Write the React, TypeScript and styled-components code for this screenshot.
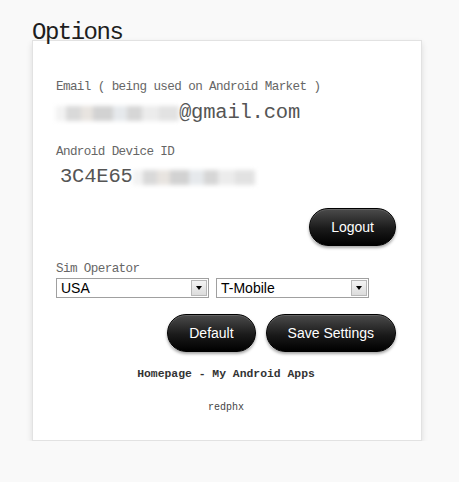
import styled, { createGlobalStyle } from 'styled-components'

const GlobalStyle = createGlobalStyle`
  html, body {
    margin: 0;
    padding: 0;
    background: #f9f9f9;
  }
`

const Page = styled.div`
  padding: 26px 0 0 32px;
  width: 390px;
`

const Title = styled.h1`
  color: #1e1e1e;
  font-family: 'Liberation Mono', monospace;
  font-size: 24px;
  font-weight: 400;
  letter-spacing: -1.5px;
  line-height: 14px;
  margin: 0;
`

const Card = styled.div`
  background: #fff;
  border: 1px solid #e2e2e2;
  box-shadow: 0 3px 6px rgba(0, 0, 0, 0.12);
  box-sizing: border-box;
  height: 401px;
  padding: 39px 25px 0 23px;
`

const Label = styled.div<{ $gap?: number }>`
  color: #666;
  font-family: 'Liberation Mono', monospace;
  font-size: 12.6px;
  letter-spacing: -0.6px;
  line-height: 14px;
  margin-top: ${({ $gap }) => $gap ?? 0}px;
`

const Value = styled.div<{ $gap: number; $indent?: number }>`
  align-items: center;
  color: #555;
  display: flex;
  font-family: 'Liberation Mono', monospace;
  font-size: 20.5px;
  letter-spacing: -0.2px;
  line-height: 24px;
  margin-top: ${({ $gap }) => $gap}px;
  padding-left: ${({ $indent }) => $indent ?? 0}px;
`

const Blur = styled.span<{ $width: number }>`
  background: linear-gradient(
    90deg,
    #f2f2f2 0 8%,
    #d9d9d9 8% 20%,
    #e8e4e0 20% 30%,
    #d2d2d2 30% 46%,
    #e6e9ec 46% 58%,
    #d6d6d6 58% 70%,
    #ececec 70% 84%,
    #e2e2e2 84% 100%
  );
  display: inline-block;
  filter: blur(2px);
  height: 15px;
  width: ${({ $width }) => $width}px;
`

const Row = styled.div<{ $gap: number }>`
  display: flex;
  gap: 10px;
  justify-content: flex-end;
  margin-top: ${({ $gap }) => $gap}px;
`

const PillButton = styled.button`
  background: linear-gradient(#4b4b4b, #1a1a1a 55%, #000);
  border: 1px solid #000;
  border-radius: 19px;
  box-shadow: 0 2px 3px rgba(0, 0, 0, 0.35), inset 0 1px 0 rgba(255, 255, 255, 0.15);
  color: #fff;
  font-family: 'Liberation Sans', Arial, sans-serif;
  font-size: 14px;
  height: 38px;
  padding: 0 21px;
`

const SelectRow = styled.div`
  display: flex;
  gap: 7px;
  margin-top: 2px;
`

const SelectBox = styled.div`
  align-items: center;
  background: #fff;
  border: 1px solid #a0a0a0;
  box-sizing: border-box;
  display: flex;
  height: 20px;
  padding: 1px 1px 1px 4px;
  width: 153px;
`

const SelectText = styled.span`
  color: #000;
  flex: 1;
  font-family: 'Liberation Sans', Arial, sans-serif;
  font-size: 14px;
`

const ArrowButton = styled.span`
  align-items: center;
  background: linear-gradient(#f4f4f4, #dcdcdc);
  border: 1px solid #b8b8b8;
  box-sizing: border-box;
  display: flex;
  height: 16px;
  justify-content: center;
  width: 16px;

  &::after {
    border-left: 3.5px solid transparent;
    border-right: 3.5px solid transparent;
    border-top: 4px solid #000;
    content: '';
  }
`

const Footer = styled.div<{ $gap: number; $bold?: boolean }>`
  color: ${({ $bold }) => ($bold ? '#333' : '#444')};
  font-family: 'Liberation Mono', monospace;
  font-size: ${({ $bold }) => ($bold ? 11.4 : 10)}px;
  font-weight: ${({ $bold }) => ($bold ? 700 : 400)};
  line-height: 14px;
  margin-top: ${({ $gap }) => $gap}px;
  text-align: center;
`

const Select = ({ value }: { value: string }) => (
  <SelectBox>
    <SelectText>{value}</SelectText>
    <ArrowButton />
  </SelectBox>
)

const App = () => (
  <>
    <GlobalStyle />
    <Page>
      <Title>Options</Title>
      <Card>
        <Label>Email ( being used on Android Market )</Label>
        <Value $gap={7}>
          <Blur $width={123} />
          @gmail.com
        </Value>
        <Label $gap={20}>Android Device ID</Label>
        <Value $gap={6} $indent={4}>
          3C4E65
          <Blur $width={122} />
        </Value>
        <Row $gap={19}>
          <PillButton>Logout</PillButton>
        </Row>
        <Label $gap={16}>Sim Operator</Label>
        <SelectRow>
          <Select value="USA" />
          <Select value="T-Mobile" />
        </SelectRow>
        <Row $gap={16}>
          <PillButton>Default</PillButton>
          <PillButton>Save Settings</PillButton>
        </Row>
        <Footer $gap={15} $bold>
          Homepage - My Android Apps
        </Footer>
        <Footer $gap={20}>redphx</Footer>
      </Card>
    </Page>
  </>
)

export default App
